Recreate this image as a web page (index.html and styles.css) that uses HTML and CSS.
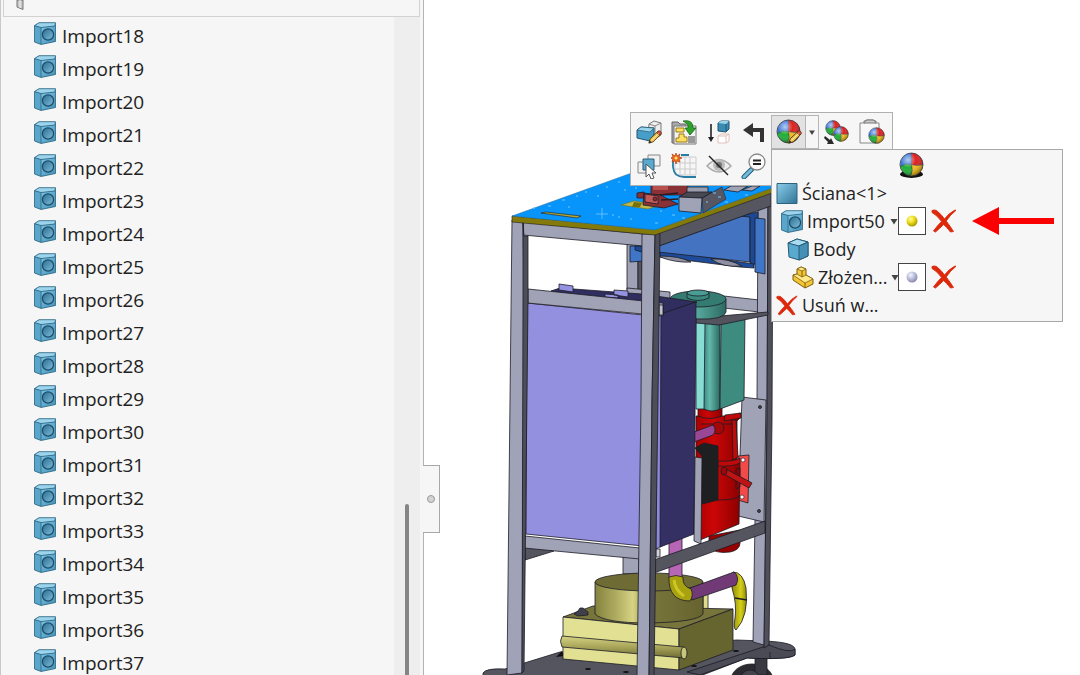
FILE: index.html
```html
<!DOCTYPE html>
<html lang="pl">
<head>
<meta charset="utf-8">
<title>Import50</title>
<link rel="stylesheet" href="styles.css">
</head>
<body>
<svg class="defs" aria-hidden="true">
  <defs>
    <linearGradient id="gBlue" x1="0" y1="0" x2="1" y2="1"><stop offset="0" stop-color="#8ccdea"/><stop offset="1" stop-color="#2f7396"/></linearGradient>
    <linearGradient id="gHole" x1="0" y1="0" x2="1" y2="1"><stop offset="0" stop-color="#2b6c90"/><stop offset="1" stop-color="#7fbfdd"/></linearGradient>
    <linearGradient id="gFace" x1="0" y1="0" x2="1" y2="1"><stop offset="0" stop-color="#7cc4e4"/><stop offset="1" stop-color="#4592b8"/></linearGradient>
    <radialGradient id="gShine" cx=".35" cy=".3" r=".7"><stop offset="0" stop-color="#fff" stop-opacity=".65"/><stop offset=".5" stop-color="#fff" stop-opacity="0"/><stop offset="1" stop-color="#000" stop-opacity=".35"/></radialGradient>
    <radialGradient id="gYellow" cx=".38" cy=".32" r=".7"><stop offset="0" stop-color="#fffbb0"/><stop offset=".45" stop-color="#f2e01c"/><stop offset="1" stop-color="#a89600"/></radialGradient>
    <radialGradient id="gLilac" cx=".38" cy=".32" r=".7"><stop offset="0" stop-color="#f4f5ff"/><stop offset=".5" stop-color="#bcc0dc"/><stop offset="1" stop-color="#8488a4"/></radialGradient>
    <symbol id="feature" viewBox="0 0 22 23">
      <path d="M.5 3.500 5 .7H21.500V19.500L7 22.500.5 20Z" fill="#4a93b8"/>
      <path d="M1 3.500 5 1H21L20 4 7 5.500Z" fill="#9bd4ec"/>
      <path d="M1 4 7 5.500V22L1 20Z" fill="#5aa6ca"/>
      <path d="M7 5.500 21 4V19.500L7 22Z" fill="url(#gFace)"/>
      <path d="M.5 3.500 5 .7H21.500V19.500L7 22.500.5 20ZM.5 3.700 7 5.500 21 4M7 5.500V22" fill="none" stroke="#2b6482" stroke-width=".8"/>
      <circle cx="14" cy="12.500" r="5.600" fill="url(#gHole)" stroke="#1d4d69" stroke-width="1.300"/>
    </symbol>
    <symbol id="ball" viewBox="0 0 26 26">
      <path d="M13 13V1A12 12 0 0 0 1.500 15Q7 11 13 13Z" fill="#2f6fd6"/>
      <path d="M13 13V1A12 12 0 0 1 25 13Q19 15 13 13Z" fill="#dc2020"/>
      <path d="M13 13Q6 11 1.500 15A12 12 0 0 0 12 25Q15 19 13 13Z" fill="#1fae36"/>
      <path d="M13 13Q19 15 25 13A12 12 0 0 1 12 25Q15 19 13 13Z" fill="#f3bd16"/>
      <path d="M13 1V13Q15 19 12 25M1.500 15Q7 11 13 13 19 15 25 13" fill="none" stroke="#3a3a4a" stroke-width=".7"/>
      <circle cx="13" cy="13" r="12" fill="url(#gShine)" stroke="#33333f" stroke-width=".8"/>
    </symbol>
    <symbol id="pencil" viewBox="0 0 16 16">
      <path d="M1 15 2.500 10 11 2 14.500 5 6 13.500Z" fill="#f2c14a" stroke="#4a3a1c"/>
      <path d="M10 3 11.500 1.200Q13 .3 14.500 1.800T15 4.500L13.500 6Z" fill="#d94f34" stroke="#4a2a1c" stroke-width=".8"/>
      <path d="M1 15 2 12 4 14Z" fill="#222"/><path d="M4 12 12 4" stroke="#fff2b8"/>
    </symbol>
    <symbol id="cross" viewBox="0 0 26 24">
      <path d="M1 1.500Q3 .5 5.500 1.500 11 6 13.500 10 18 4 24 1L25 1.300Q19 6 15.200 12 19 17 22.500 22.500L19.500 23Q16 18.500 12.700 15.500 8 20 4.500 23L2.500 22Q6 17 10.500 12.500 6 6 1 3.500Z" fill="#dd280c" stroke="#dd280c" stroke-width=".9"/>
    </symbol>
    <symbol id="caret" viewBox="0 0 8 6"><path d="M.5.5h7L4 6Z" fill="#444"/></symbol>
  </defs>
</svg>

<div class="app">
  <aside class="panel">
    <div class="panel-head">
      <svg class="grip" viewBox="0 0 9 10"><path d="M1 0V7L7 9.500V0Z" fill="#c8c8c8" stroke="#777"/><path d="M4 0V8" stroke="#f4f4f4"/></svg>
    </div>
    <div class="panel-body">
      <ul class="tree">
        <li><svg><use href="#feature"/></svg>Import18</li>
        <li><svg><use href="#feature"/></svg>Import19</li>
        <li><svg><use href="#feature"/></svg>Import20</li>
        <li><svg><use href="#feature"/></svg>Import21</li>
        <li><svg><use href="#feature"/></svg>Import22</li>
        <li><svg><use href="#feature"/></svg>Import23</li>
        <li><svg><use href="#feature"/></svg>Import24</li>
        <li><svg><use href="#feature"/></svg>Import25</li>
        <li><svg><use href="#feature"/></svg>Import26</li>
        <li><svg><use href="#feature"/></svg>Import27</li>
        <li><svg><use href="#feature"/></svg>Import28</li>
        <li><svg><use href="#feature"/></svg>Import29</li>
        <li><svg><use href="#feature"/></svg>Import30</li>
        <li><svg><use href="#feature"/></svg>Import31</li>
        <li><svg><use href="#feature"/></svg>Import32</li>
        <li><svg><use href="#feature"/></svg>Import33</li>
        <li><svg><use href="#feature"/></svg>Import34</li>
        <li><svg><use href="#feature"/></svg>Import35</li>
        <li><svg><use href="#feature"/></svg>Import36</li>
        <li><svg><use href="#feature"/></svg>Import37</li>
      </ul>
      <div class="scroll"><div class="thumb"></div></div>
    </div>
  </aside>

  <main class="view">
    <svg class="model" viewBox="424 0 656 675" preserveAspectRatio="xMinYMin meet" stroke="#1c1c26" stroke-width=".8" stroke-linejoin="round">
      <defs>
        <linearGradient id="mDrum"><stop offset="0" stop-color="#85823f"/><stop offset=".2" stop-color="#b0ad62"/><stop offset=".35" stop-color="#d6d384"/><stop offset=".55" stop-color="#77743a"/><stop offset="1" stop-color="#66632f"/></linearGradient>
        <linearGradient id="mTeal"><stop offset="0" stop-color="#3b8a80"/><stop offset=".35" stop-color="#62b8ac"/><stop offset="1" stop-color="#2d6a62"/></linearGradient>
        <linearGradient id="mRed"><stop offset="0" stop-color="#a80000"/><stop offset=".4" stop-color="#cc0606"/><stop offset="1" stop-color="#8c0000"/></linearGradient>
        <linearGradient id="mPipe" x1="0" y1="0" x2="0" y2="1"><stop offset="0" stop-color="#d6d384"/><stop offset=".5" stop-color="#a8a55a"/><stop offset="1" stop-color="#6e6b34"/></linearGradient>
        <linearGradient id="mElbow"><stop offset="0" stop-color="#8e8a08"/><stop offset=".6" stop-color="#d6d01a"/><stop offset="1" stop-color="#8e8a08"/></linearGradient>
      </defs>
      <!-- wheels and platform -->
      <ellipse cx="752" cy="680" rx="21" ry="16" fill="#2c2c30"/>
      <path d="M755 656H767V675H755Z" fill="#3a3a42"/>
      <ellipse cx="750" cy="680" rx="10" ry="10" fill="#44444c"/>
      <path d="M483 673Q486 668 505 669L560 652 737 640 763 641Q796 642 795 650V655Q790 660 747 658L700 676H483Z" fill="#54555f"/>
      <path d="M687 672 769 645Q790 654 795 649V655Q788 660 747 658L700 675Z" fill="#4a4b55"/>
      <path d="M770 652V659" fill="none"/>
      <g fill="#111" stroke="none"><ellipse cx="588" cy="669" rx="3" ry="1"/><ellipse cx="626" cy="672" rx="3" ry="1"/><ellipse cx="694" cy="666" rx="3" ry="1"/><ellipse cx="736" cy="651" rx="3" ry="1"/><path d="M556 657 562 651 564 656Z"/></g>
      <!-- rear frame -->
      <path d="M627 240H638V290H627Z" fill="#a0a2b5"/><path d="M638 240H642V292H638Z" fill="#54555f"/>
      <path d="M623 555H639V574H623Z" fill="#a0a2b5"/>
      <path d="M627 288 670 292V302H627Z" fill="#a0a2b5"/>
      <path d="M706 294 768 301V313L706 306Z" fill="#a0a2b5"/>
      <path d="M758 200H768L767 420 764 645 753 642 757 400Z" fill="#a0a2b8"/>
      <path d="M768 190H773L772 420 769 645 764 648 767 420Z" fill="#4f505a"/>
      <path d="M525 545 554 551 525 560Z" fill="#54555f"/>
      <!-- blue housing -->
      <path d="M630 246H644V261L630 262Z" fill="#3f76c8"/>
      <path d="M635 246H660V254L645 253 635 250Z" fill="#1d4994"/>
      <path d="M660 250 754 264V268L740 267 660 257Z" fill="#1f4c98"/>
      <path d="M658 246 750 213V262L658 252Z" fill="#4473c2"/>
      <path d="M738 216 758 212V265L750 263V217Z" fill="#1d4994"/>
      <path d="M755 218 765 219V274L755 272Z" fill="#3f76c8"/>
      <path d="M660 256Q680 256 691 262 676 263 660 257ZM711 259Q728 258 742 266 723 268 711 259Z" fill="#8e90a2"/>
      <!-- mounting plate -->
      <path d="M742 397 766 400 764 522 738 516Z" fill="#a0a2b5"/>
      <g fill="#44444c"><circle cx="760" cy="407" r="1.500"/><circle cx="759" cy="511" r="1.500"/></g>
      <!-- red pump -->
      <path d="M709 536V547Q715 554 730 552 740 550 740 543V530Z" fill="#990000"/>
      <path d="M738 456 749 455 748 503 738 500Z" fill="#f24a48"/>
      <g fill="#fff" stroke-width=".6"><circle cx="743" cy="460" r="2"/><circle cx="742" cy="497" r="2"/></g>
      <path d="M696 416H734L740 413V418L737 421V460L740 463 739 524 700 540 696 500Z" fill="url(#mRed)"/>
      <path d="M698 405H722V416Q710 421 698 416Z" fill="url(#mRed)"/>
      <path d="M725 415 741 413V418L724 421ZM732 420 736 420 738 457 733 460ZM718 461Q733 462 740 458V463Q732 467 718 466Z" fill="#c00a0a"/>
      <path d="M718 500Q735 500 740 496M701 424H733M736 469 740 468V487L736 489Z" fill="none"/>
      <path d="M724 468 752 483 749 488 722 473Z" fill="#c01414"/><ellipse cx="724" cy="471" rx="3" ry="4" fill="#9a0808"/>
      <circle cx="718" cy="428" r="6" fill="#a40707"/>
      <path d="M694 432 713 425Q717 430 713 435L694 442Z" fill="#9a4796"/>
      <path d="M695 448 704 443 718 446V500L702 504V456Z" fill="#1e1f20"/>
      <!-- teal motor -->
      <path d="M696 322H706L705 409H696Z" fill="#87ddd3"/>
      <path d="M705 322H720V409Q712 413 704 409Z" fill="url(#mTeal)"/>
      <path d="M721 323 745 316 744 400 720 409Z" fill="#3e8b80"/>
      <path d="M696 318 768 312 768 315 719 325 696 323Z" fill="#53545e"/>
      <path d="M670 299V304L697 319Q724 320 726 312V299Z" fill="url(#mTeal)"/>
      <ellipse cx="698" cy="299" rx="28" ry="8" fill="#347c72"/>
      <path d="M687 293V298Q698 303 709 298V293Z" fill="#3b8a80"/><ellipse cx="698" cy="293" rx="11" ry="3" fill="#4b9c92"/>
      <!-- lower machine -->
      <path d="M703 593H708V612H703Z" fill="#dedc8c"/>
      <path d="M563 617 593 606 733 609 679 629Z" fill="#77753b"/>
      <path d="M563 617 679 629V670L563 659Z" fill="#e2e092"/>
      <path d="M679 629 733 609V650L679 670Z" fill="#66642f"/>
      <path d="M595 582V614Q604 623 649 623 698 622 703 614V582Z" fill="url(#mDrum)"/>
      <ellipse cx="649" cy="582" rx="54" ry="9" fill="#6e6b35"/>
      <path d="M562 636 683 647Q689 652 684 658L562 647Q559 641 562 636Z" fill="url(#mPipe)"/><ellipse cx="684" cy="653" rx="3" ry="6" fill="#c9c679"/>
      <path d="M574 614 578 611 580 608H583L588 612V615L578 616Z" fill="#3f404a"/>
      <path d="M733 572Q743 572 746 588 749 616 736 630 733 628 735 618 737 604 732 588Z" fill="url(#mElbow)"/>
      <path d="M735 598 747 600" stroke-width="1.500"/>
      <path d="M690 588 734 572Q740 577 736 585L692 600Z" fill="#713a76"/>
      <path d="M669 536H682V578H669Z" fill="#b766b6"/>
      <path d="M669 577Q676 574 683 577 682 586 691 589 694 595 690 601 668 601 669 577Z" fill="#a8a210"/>
      <path d="M674 580Q675 590 684 596" fill="none" stroke="#cdc726" stroke-width="3"/>
      <!-- violet tank -->
      <path d="M551 291 560 288 642 294 697 302 661 314Z" fill="#302d5f"/>
      <path d="M559 284 573 286V292L559 290ZM614 290 628 291V297L614 295ZM605 294 618 295V298L605 297Z" fill="#9692e2"/>
      <path d="M527 303 643 315V546L526 534Z" fill="#9490e0"/>
      <path d="M656 314H662V546L656 549Z" fill="#8d89da"/>
      <path d="M661 314 696 302 694 534 660 547Z" fill="#343064"/>
      <path d="M695 457 702 458 701 544 694 541Z" fill="#a0a2b5"/>
      <!-- frame rails -->
      <path d="M528 289 663 303V316L528 303Z" fill="#a0a2b5"/><path d="M659 305H663V315H659Z" fill="#c0c2ce"/>
      <path d="M525 536 640 548V559L524 548Z" fill="#a0a2b5"/>
      <path d="M656 549H660V557H656Z" fill="#d0d1da"/>
      <path d="M654 560 765 521V533L654 573Z" fill="#54555f"/>
      <path d="M659 231 771 190V206L659 246Z" fill="#55565f"/>
      <path d="M523 222 643 234V246L523 235Z" fill="#a0a2b5"/>
      <!-- front legs -->
      <path d="M512 220 523 221 524 300 522 673 507 675 510 400Z" fill="#a0a2b8"/>
      <path d="M523 222V300L522 673 524 671 528 300V236H524Z" fill="#4d4e58"/>
      <path d="M642 234H655L652 400 649 676H637L641 400Z" fill="#a0a2b8"/>
      <path d="M655 235 660 232 658 400 654 676H649L652 400Z" fill="#4d4e58"/>
      <!-- table top -->
      <path d="M512 216 655 229 772 184V193L655 235 512 222Z" fill="#847a0a" stroke-width=".6"/>
      <path d="M512 216 640 170H772V188L655 230Z" fill="#0794fb" stroke="#2a6f9c" stroke-width=".5"/>
      <path d="M541 213 546 212 581 216 577 218Z" fill="#b0a838" stroke-width=".6"/>
      <path d="M621 205 634 201 660 205 648 209Z" fill="#c2b94a" stroke="#77700b" stroke-width=".6"/><path d="M634 202 642 203 640 207H632Z" fill="#77700b" stroke="none"/>
      <g fill="#8a3136"><path d="M651 184H688V195H651Z"/><path d="M637 193 644 192V198H637Z"/><path d="M644 193 660 195 678 204 664 208 643 205Z"/></g>
      <path d="M645 194 658 196V204L645 202Z" fill="#c35a58"/><path d="M660 195 678 193M661 200 678 199" stroke="#30191e" stroke-width="1.500"/>
      <path d="M653 186H668V190H653Z" fill="#b8504e" stroke="none"/>
      <circle cx="655" cy="199" r="2" fill="#8d2a30"/>
      <path d="M687 187H708V193H687Z" fill="#9a9caf"/><path d="M702 198 722 187 726 199 703 213Z" fill="#565762" stroke-width=".5"/>
      <path d="M679 197 687 192H712L702 198Z" fill="#484953"/><path d="M679 197 702 198 701 213 679 211Z" fill="#a0a2b5"/>
      <path d="M724 190 731 186H748L738 192ZM742 190 752 186H760L752 191Z" fill="#a0a2b5"/>
      <g stroke="#72c8ff" fill="none"><path d="M602 208V219M596 214H608"/><path d="M548 206h3M562 200h3M576 196h2M585 192h2M597 196h2M606 187h2M618 182h2M612 215h2M618 217h2M630 219h2M655 223h3M672 215h3M682 218h3M713 193h3M718 197h3M725 202h3M568 207h2M624 190h2M635 188h2M706 202h2M745 195h3M533 208h2M660 211h2" stroke-width="1"/></g>
    </svg>

    <button class="flap" aria-label="Panel"><span></span></button>

    <div class="toolbar">
      <div class="tools">
        <button aria-label="Edytuj element"><svg viewBox="0 0 26 26"><path d="M13 5 18 2 25 4V16L19 20 12 16Z" fill="#eee" stroke="#777"/><path d="M13 5 19 7 25 4M19 7V19" fill="none" stroke="#888"/><path d="M1 11 5 8 18 9V18L14 22 1 19Z" fill="#479fc9" stroke="#24566f"/><path d="M1 11 5 8 18 9 14 13Z" fill="#9bd5ed" stroke="#24566f" stroke-width=".7"/><use href="#pencil" x="12" y="11" width="14" height="14"/></svg></button>
        <button aria-label="Otwórz złożenie"><svg viewBox="0 0 26 26"><path d="M1 3H7L9 5H15V24H1Z" fill="#aaa" stroke="#666"/><path d="M3 7H25V25H3Z" fill="#f4f4f4" stroke="#777"/><path d="M5 9H13V13H5ZM8 15H13V18H16V23H5V19H8Z" fill="#ffe061" stroke="#9a7916"/><path d="M17 17H24V24H17Z" fill="#999"/><path d="M12 2Q22 0 22 9H25L19 16 14 9H17Q18 5 12 2Z" fill="#2da32a" stroke="#17631a" stroke-width=".8"/></svg></button>
        <button aria-label="Wstaw bryłę"><svg viewBox="0 0 26 26"><path d="M5 5V20" stroke="#222" stroke-width="1.600"/><path d="M2 18H8L5 23Z" fill="#222"/><path d="M12 4 15 2H23V10L20 13 12 12Z" fill="#3a8bb2" stroke="#205571"/><path d="M12 4 15 2H23L20 5Z" fill="#9bd3ea"/><path d="M20 5V12" stroke="#205571"/><path d="M12 17 15 15H23V22L20 24H12ZM12 17H20L23 15M20 17V24" fill="#fff" stroke="#e0c2bc"/></svg></button>
        <button aria-label="Cofnij"><svg viewBox="0 0 26 26"><path d="M2 11 12 4V9H23V23H19V13H12V18Z" fill="#333"/></svg></button>
        <button class="active" aria-label="Wyglądy"><svg viewBox="0 0 26 26"><use href="#ball" x="0" y="0" width="25" height="25"/><use href="#pencil" x="12" y="11" width="14" height="14"/></svg></button>
        <button class="split" aria-label="Więcej"><svg viewBox="0 0 8 6"><use href="#caret"/></svg></button>
        <button aria-label="Kopiuj wygląd"><svg viewBox="0 0 26 26"><use href="#ball" x="1" y="1" width="16" height="16"/><use href="#ball" x="9" y="7" width="16" height="16"/><path d="M1 17 6 21 7 19 10 25 3 25 4 23 0 19Z" fill="#2a2a2a"/></svg></button>
        <button aria-label="Wklej wygląd"><svg viewBox="0 0 26 26"><path d="M1 4H6V2H8V1H14V2H16V4H20V24H1Z" fill="#f8f8f8" stroke="#888"/><path d="M5 4H17V2H15V1H7V2H5Z" fill="#ccc" stroke="#777"/><use href="#ball" x="9" y="8" width="17" height="17"/></svg></button>
      </div>
      <div class="tools">
        <button aria-label="Wybierz"><svg viewBox="0 0 26 26"><path d="M12 2H24V13H12ZM2 9H12V20H2Z" fill="#f1f1f1" stroke="#888"/><path d="M7 6H18V17H7Z" fill="#5ba9cd" stroke="#285d78"/><path d="M10 11V24L13 21 15 26 18 25 16 20H20Z" fill="#fff" stroke="#555"/></svg></button>
        <button aria-label="Szkic"><svg viewBox="0 0 26 26"><path d="M8 4H25V22H4V10M9 4V22M14 4V22M19 4V22M4 10H25M4 16H25" fill="none" stroke="#ccc"/><path d="M2 7V14Q3 24 13 24H25M10 2H18" fill="none" stroke="#287da6" stroke-width="1.800"/><path d="M5 0 6 3 9 1 8 4 11 5 8 6 9 9 6 8 5 11 4 8 1 9 2 6-1 5 2 4 1 1 4 3Z" fill="#ee6a1e" stroke="#b54010" stroke-width=".7"/><circle cx="5" cy="5" r="1.500" fill="#ffdf70"/></svg></button>
        <button aria-label="Ukryj"><svg viewBox="0 0 26 26"><path d="M1 13Q13 0 25 13 13 25 1 13Z" fill="#eee" stroke="#aaa" stroke-width="1.500"/><circle cx="13" cy="12" r="6" fill="#bbb"/><circle cx="13" cy="12" r="3" fill="#777"/><path d="M3 3 22 22" stroke="#222" stroke-width="1.500"/></svg></button>
        <button aria-label="Powiększ"><svg viewBox="0 0 26 26"><path d="M11 16 3 24" stroke="#25607f" stroke-width="5" stroke-linecap="round"/><path d="M10 17 3 24" stroke="#73bbda" stroke-width="3" stroke-linecap="round"/><circle cx="16" cy="9" r="8" fill="#fafafa" stroke="#888" stroke-width="1.300"/><path d="M12 7.500H20M12 11H20" stroke="#222" stroke-width="2"/></svg></button>
      </div>
    </div>

    <section class="popup">
      <div class="popup-head"><svg viewBox="0 0 26 28"><ellipse cx="13" cy="23" rx="12" ry="4" fill="#111"/><use href="#ball" x="0" y="0" width="26" height="26"/></svg></div>
      <div class="row">
        <div class="label"><svg class="ico" viewBox="0 0 22 22"><path d="M1 1H21V21H1Z" fill="url(#gBlue)" stroke="#2c6480"/></svg>Ściana&lt;1&gt;</div>
      </div>
      <div class="row">
        <div class="label level-1"><svg class="ico"><use href="#feature"/></svg>Import50<button class="drop" aria-label="Rozwiń Import50"><svg><use href="#caret"/></svg></button></div>
        <button class="swatch" aria-label="Kolor Import50"><svg viewBox="0 0 12 12"><circle cx="6" cy="6" r="5.500" fill="url(#gYellow)"/></svg></button>
        <button class="remove" aria-label="Usuń wygląd Import50"><svg><use href="#cross"/></svg></button>
        <svg class="arrow" viewBox="0 0 82 28"><path d="M0 14 27 0V11H82V17H27V28Z" fill="#fb0000"/></svg>
      </div>
      <div class="row">
        <div class="label level-2"><svg class="ico" viewBox="0 0 22 23"><path d="M1 5 10 1 21 4V18L12 22 2 19Z" fill="#5aa9ce" stroke="#245a76"/><path d="M1 5 10 1 21 4 12 8Z" fill="#a9dcf1" stroke="#245a76"/><path d="M12 8 21 4V18L12 22Z" fill="#4690b5" stroke="#245a76"/></svg>Body</div>
      </div>
      <div class="row">
        <div class="label level-3"><svg class="ico" viewBox="0 0 22 23"><path d="M5 3 9 1 14 3V9L21 13V18L13 22 1 14V9L5 8Z" fill="#f4c534" stroke="#7f5f0c"/><path d="M5 3 9 1 14 3 10 5ZM1 9 5 8 10 11 14 9 21 13 13 17Z" fill="#ffe88a" stroke="#7f5f0c" stroke-width=".8"/><path d="M10 5V11M13 17V22" stroke="#7f5f0c"/></svg>Złożen...<button class="drop" aria-label="Rozwiń złożenie"><svg><use href="#caret"/></svg></button></div>
        <button class="swatch" aria-label="Kolor złożenia"><svg viewBox="0 0 12 12"><circle cx="6" cy="6" r="5.500" fill="url(#gLilac)"/></svg></button>
        <button class="remove" aria-label="Usuń wygląd złożenia"><svg><use href="#cross"/></svg></button>
      </div>
      <div class="row">
        <button class="label"><svg class="ico"><use href="#cross"/></svg>Usuń w...</button>
      </div>
    </section>
  </main>
</div>
</body>
</html>
```

FILE: styles.css
```css
* {
  box-sizing: border-box;
}

body {
  margin: 0;
  background: #fff;
  color: #222;
  font-family: "Open Sans", "Noto Sans", sans-serif;
}

button {
  margin: 0;
  padding: 0;
  border: 0;
  background: none;
  color: inherit;
  font: inherit;
  cursor: pointer;
}

svg {
  display: block;
  flex: none;
}

.defs {
  position: absolute;
  width: 0;
  height: 0;
}

.app {
  display: flex;
  height: 100vh;
  overflow: hidden;
}

.panel {
  display: flex;
  flex: none;
  flex-direction: column;
  width: 424px;
  padding: 0 3px 0 2px;
  border-right: 1px solid #b4b4b4;
  border-left: 1px solid #c8c8c8;
  background: #f6f6f6;
}

.panel-head {
  flex: none;
  height: 17px;
  padding-left: 12px;
  border: 1px solid #d2d2d2;
  border-top: 0;
}

.grip {
  width: 9px;
  height: 10px;
}

.panel-body {
  display: flex;
  flex: 1;
  min-height: 0;
}

.tree {
  flex: 1;
  margin: 0;
  padding: 3px 0 0 31px;
  overflow: hidden;
  list-style: none;
  font-size: 19px;
  line-height: 33px;
}

.tree li {
  display: flex;
  gap: 6px;
  height: 33px;
}

.tree svg {
  width: 22px;
  height: 23px;
  margin-top: 2px;
}

.scroll {
  display: flex;
  flex-direction: column;
  align-items: center;
  justify-content: flex-end;
  width: 26px;
  background: #eee;
}

.thumb {
  width: 4px;
  height: 26%;
  border-radius: 2px 2px 0 0;
  background: #858585;
}

.view {
  position: relative;
  flex: 1;
  min-width: 0;
}

.model {
  width: 100%;
  height: auto;
}

.flap {
  position: absolute;
  top: 465px;
  left: -1px;
  display: flex;
  align-items: center;
  justify-content: center;
  width: 17px;
  height: 68px;
  border: 1px solid #a8a8a8;
  border-left: 0;
  background: #f6f6f6;
}

.flap span {
  width: 8px;
  height: 8px;
  border: 1px solid #999;
  border-radius: 50%;
  background: #d4d4d4;
}

.toolbar {
  position: absolute;
  top: 112px;
  left: 206px;
  padding: 2px 3px 2px 0;
  border: 1px solid #b0b0b0;
  background: #f6f6f6;
}

.tools {
  display: flex;
}

.tools button {
  display: flex;
  align-items: center;
  justify-content: center;
  width: 35px;
  height: 34px;
}

.tools svg {
  width: 26px;
  height: 26px;
}

.tools .active {
  border: 1px solid #b4b4b4;
  background: #e2e2e2;
}

.tools .split {
  width: 13px;
  border: 1px solid #b4b4b4;
  border-left: 0;
}

.tools .split svg {
  width: 8px;
  height: 5px;
}

.popup {
  position: absolute;
  top: 149px;
  left: 347px;
  width: 292px;
  padding-bottom: 2px;
  border: 1px solid #a8a8a8;
  background: #f6f6f6;
  font-size: 18px;
  line-height: 28px;
}

.popup-head {
  display: flex;
  justify-content: center;
  height: 29px;
  padding: 2px 12px 0 0;
}

.popup-head svg {
  width: 25px;
  height: 27px;
}

.row {
  display: flex;
  align-items: center;
  height: 28px;
}

.label {
  display: flex;
  align-items: center;
  gap: 4px;
  width: 126px;
  height: 28px;
  padding-left: 4px;
  white-space: nowrap;
}

.level-1 {
  padding-left: 9px;
}

.level-2 {
  padding-left: 15px;
}

.level-3 {
  padding-left: 20px;
}

.ico {
  width: 22px;
  height: 23px;
}

.label .drop {
  margin-left: auto;
}

.drop svg {
  width: 8px;
  height: 7px;
}

.swatch {
  display: flex;
  align-items: center;
  justify-content: center;
  width: 28px;
  height: 28px;
  border: 1px solid #444;
  background: #fff;
}

.swatch svg {
  width: 12px;
  height: 12px;
}

.remove {
  margin-left: 5px;
}

.remove svg {
  width: 26px;
  height: 24px;
}

.arrow {
  width: 82px;
  height: 28px;
  margin-left: 15px;
}
```
